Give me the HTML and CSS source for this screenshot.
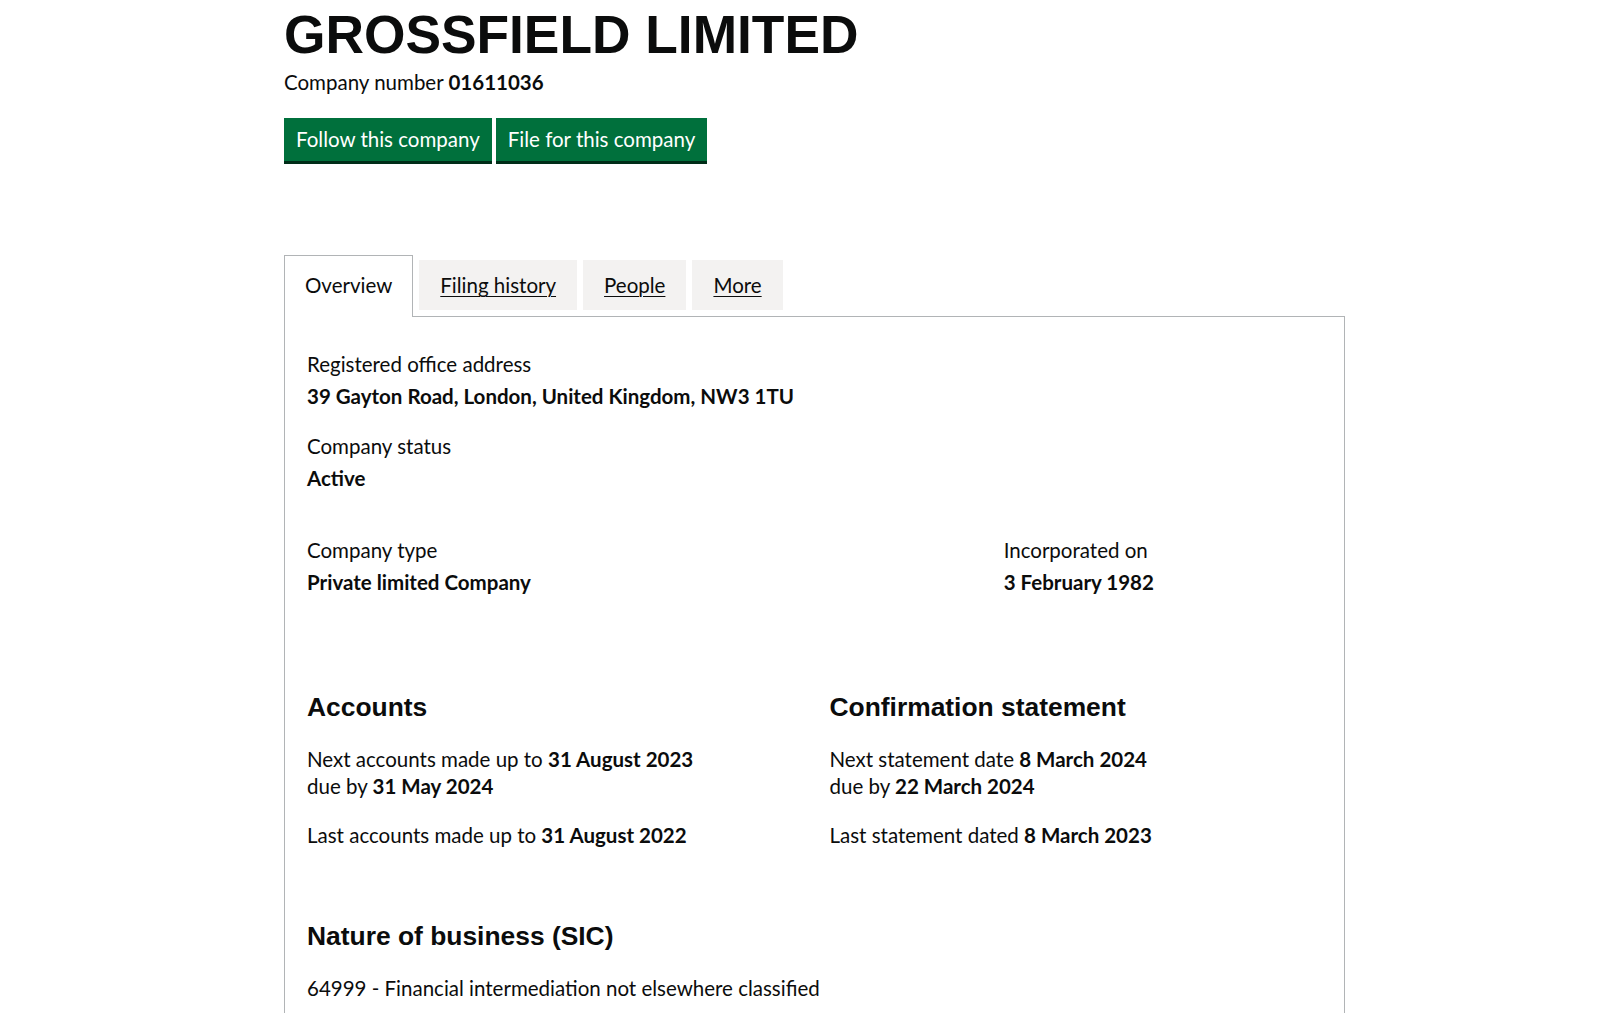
FILE: index.html
```
<!DOCTYPE html>
<html lang="en">
<head>
    <meta charset="UTF-8" />
    <meta name="viewport" content="width=device-width, initial-scale=1" />
    <title>GROSSFIELD LIMITED - Overview</title>
    <link rel="stylesheet" href="styles.css">
</head>
<body>
    <main class="page">
        <h1 class="company-name">GROSSFIELD LIMITED</h1>
        <p class="company-number">Company number <strong>01611036</strong></p>

        <div class="actions">
            <a class="button" href="#">Follow this company</a>
            <a class="button" href="#">File for this company</a>
        </div>

        <div class="tabs">
            <ul class="tab-list">
                <li class="tab tab-selected">Overview</li>
                <li class="tab"><a href="#">Filing history</a></li>
                <li class="tab"><a href="#">People</a></li>
                <li class="tab"><a href="#">More</a></li>
            </ul>

            <section class="tab-panel">
                <dl class="details first-details">
                    <dt>Registered office address</dt>
                    <dd>39 Gayton Road, London, United Kingdom, NW3 1TU</dd>
                    <dt>Company status</dt>
                    <dd>Active</dd>
                </dl>

                <div class="row row-type">
                    <div class="col-two-thirds">
                        <dl class="details">
                            <dt>Company type</dt>
                            <dd>Private limited Company</dd>
                        </dl>
                    </div>
                    <div class="col-one-third">
                        <dl class="details">
                            <dt>Incorporated on</dt>
                            <dd>3 February 1982</dd>
                        </dl>
                    </div>
                </div>

                <div class="row row-filing">
                    <div class="col-half">
                        <h2>Accounts</h2>
                        <p>Next accounts made up to <strong>31 August 2023</strong><br>
                           due by <strong>31 May 2024</strong></p>
                        <p>Last accounts made up to <strong>31 August 2022</strong></p>
                    </div>
                    <div class="col-half">
                        <h2>Confirmation statement</h2>
                        <p>Next statement date <strong>8 March 2024</strong><br>
                           due by <strong>22 March 2024</strong></p>
                        <p>Last statement dated <strong>8 March 2023</strong></p>
                    </div>
                </div>

                <h2>Nature of business (SIC)</h2>
                <ul class="sic-list">
                    <li>64999 - Financial intermediation not elsewhere classified</li>
                </ul>
            </section>
        </div>
    </main>
</body>
</html>
```

FILE: styles.css
```
body {
    font-family: Lato, "Liberation Sans", Arial, sans-serif;
    font-size: 20.5px;
    line-height: 27.5px;
    color: #0b0c0c;
    background: white;
    margin: 0;
}
.page {
    width: 1061px;
    margin-left: 284px;
    padding-top: 7px;
}
.company-name {
    font-family: "Liberation Sans", Arial, sans-serif;
    font-size: 53.3px;
    line-height: 55px;
    font-weight: bold;
    margin: 0 0 7px;
}
.company-number {
    margin: 0 0 21.5px;
}
.actions {
    display: flex;
    gap: 4px;
}
.button {
    display: inline-block;
    background-color: #00703c;
    color: white;
    text-decoration: none;
    font-size: 20.5px;
    line-height: 21px;
    padding: 9px 10px 9px;
    border: 2px solid transparent;
    box-shadow: 0 3px 0 #002d18;
}
.tabs {
    margin-top: 94px;
}
.tab-list {
    display: flex;
    align-items: flex-end;
    list-style: none;
    margin: 0;
    padding: 0;
}
.tab {
    background-color: #f3f2f1;
    padding: 12px 21px 10px;
    margin: 0 6px 6px 0;
}
.tab a {
    color: #0b0c0c;
    text-decoration: underline;
    text-underline-offset: 3px;
    text-decoration-thickness: 1px;
}
.tab-selected {
    position: relative;
    z-index: 1;
    background: white;
    border: 1px solid #b1b4b6;
    border-bottom: 0;
    padding: 16px 20px 17px;
    margin-bottom: -1px;
}
.tab-panel {
    border: 1px solid #b1b4b6;
    padding: 34px 22px 60px;
}
.details {
    margin: 0;
}
.details dt {
    margin-bottom: 4.5px;
}
.details dd {
    margin: 0 0 22.5px;
    font-weight: bold;
}
.first-details {
    margin-bottom: 45px;
}
.row {
    display: flex;
    margin: 0 -15px;
}
.row .details dd:last-child {
    margin-bottom: 0;
}
.row-type {
    margin-bottom: 94px;
}
.row-filing {
    margin-bottom: 50px;
}
.col-two-thirds {
    width: 66.6667%;
    padding: 0 15px;
    box-sizing: border-box;
}
.col-one-third {
    width: 33.3333%;
    padding: 0 15px;
    box-sizing: border-box;
}
.col-half {
    width: 50%;
    padding: 0 15px;
    box-sizing: border-box;
}
h2 {
    font-family: "Liberation Sans", Arial, sans-serif;
    font-size: 26.4px;
    line-height: 33px;
    font-weight: bold;
    margin: 0 0 22px;
}
.col-half p {
    margin: 0 0 21px;
}
.sic-list {
    list-style: none;
    margin: 0;
    padding: 0;
}
```
